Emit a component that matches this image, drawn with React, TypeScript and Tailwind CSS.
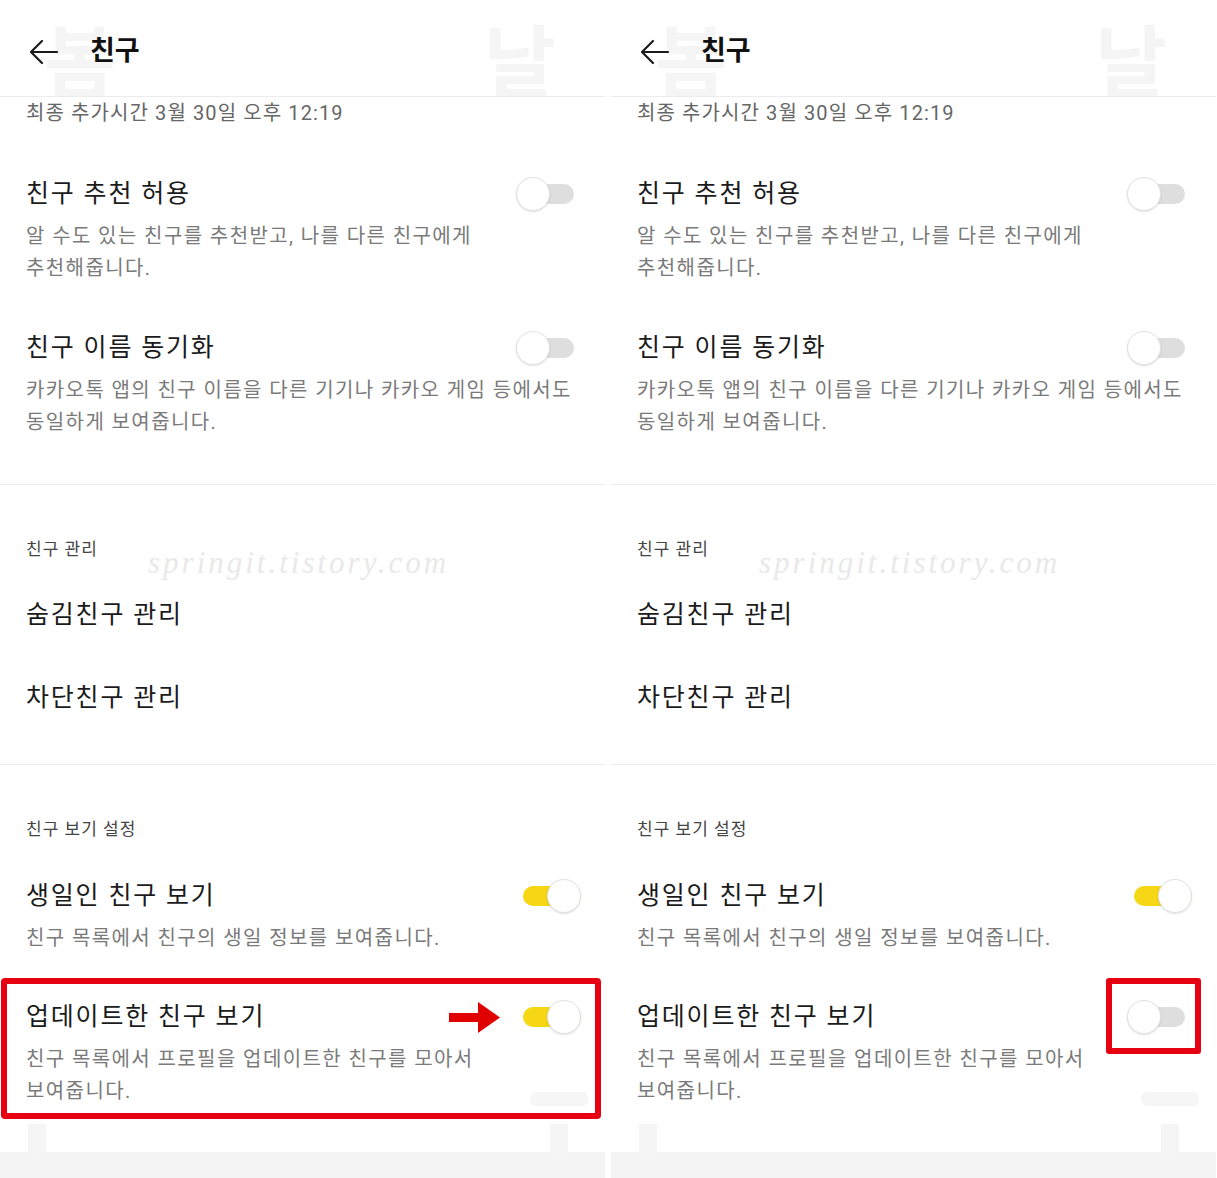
import React from "react";

const FONT = 'Roboto, "Noto Sans CJK KR", sans-serif';

function Toggle({ on }: { on: boolean }) {
  return (
    <div className={`relative h-[34px] w-[58px] shrink-0 ${on ? "mr-[24px]" : "mr-[31px]"}`}>
      <div
        className={`absolute left-0 right-0 top-[7px] h-[20px] rounded-full ${
          on ? "bg-[#f5d716]" : "bg-[#dedede]"
        }`}
      />
      <div
        className={`absolute top-0 h-[34px] w-[34px] rounded-full border border-[#e2e2e2] bg-white shadow-[0_1px_2px_rgba(0,0,0,0.12)] ${
          on ? "right-0" : "left-0"
        }`}
      />
    </div>
  );
}

function Setting({
  title,
  desc,
  on,
  extra,
}: {
  title: string;
  desc: string[];
  on: boolean;
  extra?: React.ReactNode;
}) {
  return (
    <div>
      <div className="flex h-[36px] items-center justify-between pl-[26px]">
        <span className="text-[25px] leading-[36px] tracking-[1.8px] text-[#1b1b1b]">{title}</span>
        <div className="flex items-center">
          {extra}
          <Toggle on={on} />
        </div>
      </div>
      <div className="mt-[8px] pl-[26px] text-[20px] leading-[32px] tracking-[1.4px] text-[#7a7a7a]">
        {desc.map((d) => (
          <div key={d}>{d}</div>
        ))}
      </div>
    </div>
  );
}

function Arrow() {
  return (
    <svg width="52" height="32" viewBox="0 0 52 32" className="mr-[22px]">
      <rect x="0" y="12" width="32" height="9" fill="#e00000" />
      <polygon points="29,1 51,16.5 29,32" fill="#e00000" />
    </svg>
  );
}

function Panel({ right }: { right?: boolean }) {
  return (
    <div className="relative flex w-[605px] shrink-0 flex-col overflow-hidden bg-white" style={{ fontFamily: FONT }}>
      {/* faint watermarks */}
      <div
        className="pointer-events-none absolute left-[148px] top-[540px] text-[31px] italic tracking-[3px] text-[#e9e9e9]"
        style={{ fontFamily: '"Liberation Serif", serif' }}
      >
        springit.tistory.com
      </div>
      <div className="pointer-events-none absolute left-[28px] top-[1124px] h-[30px] w-[18px] bg-[#f5f5f5]" />
      <div className="pointer-events-none absolute left-[550px] top-[1124px] h-[30px] w-[18px] bg-[#f5f5f5]" />
      <div className="pointer-events-none absolute left-[530px] top-[1092px] h-[14px] w-[58px] rounded-md bg-[#f6f6f6]" />

      {/* header */}
      <div className="relative flex h-[97px] items-center overflow-hidden border-b border-[#ececec] pt-[7px]">
        <div className="pointer-events-none absolute left-[44px] top-[26px] text-[78px] font-bold leading-none text-[#f5f5f5]">봄</div>
        <div className="pointer-events-none absolute left-[484px] top-[26px] text-[78px] font-bold leading-none text-[#f5f5f5]">날</div>
        <svg width="30" height="26" viewBox="0 0 30 26" className="relative ml-[29px]" fill="none" stroke="#1b1b1b" strokeWidth="2.2" strokeLinecap="round" strokeLinejoin="round">
          <path d="M28 13H3" />
          <path d="M13 2L2 13l11 11" />
        </svg>
        <span className="relative ml-[31px] text-[27px] font-bold text-[#111]">친구</span>
      </div>

      <div className="relative flex flex-col">
        <div className="pl-[26px] pt-[1px] text-[20px] leading-[31px] tracking-[1.1px] text-[#666]">최종 추가시간 3월 30일 오후 12:19</div>

        <div className="mt-[47px]">
          <Setting
            title="친구 추천 허용"
            desc={["알 수도 있는 친구를 추천받고, 나를 다른 친구에게", "추천해줍니다."]}
            on={false}
          />
        </div>
        <div className="mt-[46px]">
          <Setting
            title="친구 이름 동기화"
            desc={["카카오톡 앱의 친구 이름을 다른 기기나 카카오 게임 등에서도", "동일하게 보여줍니다."]}
            on={false}
          />
        </div>

        <div className="mt-[46px] h-px bg-[#ececec]" />

        <div className="mt-[52px] pl-[26px] text-[17px] leading-[24px] tracking-[1px] text-[#444]">친구 관리</div>
        <div className="mt-[36px] pl-[26px] text-[25px] leading-[36px] tracking-[1.8px] text-[#1b1b1b]">숨김친구 관리</div>
        <div className="mt-[47px] pl-[26px] text-[25px] leading-[36px] tracking-[1.8px] text-[#1b1b1b]">차단친구 관리</div>

        <div className="mt-[48px] h-px bg-[#ececec]" />

        <div className="mt-[52px] pl-[26px] text-[17px] leading-[24px] tracking-[1px] text-[#444]">친구 보기 설정</div>
        <div className="mt-[37px]">
          <Setting title="생일인 친구 보기" desc={["친구 목록에서 친구의 생일 정보를 보여줍니다."]} on={true} />
        </div>

        <div className="relative mt-[45px]">
          <Setting
            title="업데이트한 친구 보기"
            desc={["친구 목록에서 프로필을 업데이트한 친구를 모아서", "보여줍니다."]}
            on={!right}
            extra={right ? undefined : <Arrow />}
          />
          {right ? (
            <div className="absolute left-[495px] top-[-21px] h-[76px] w-[95px] rounded-[3px] border-[6px] border-[#e60012]" />
          ) : (
            <div className="absolute left-[1px] top-[-21px] h-[141px] w-[600px] rounded-[4px] border-[6px] border-[#e60012]" />
          )}
        </div>
      </div>

      <div className="mt-auto h-[26px] bg-[#f4f4f4]" />
    </div>
  );
}

export default function App() {
  return (
    <div className="flex h-[1178px] w-[1217px] gap-[6px] bg-white">
      <Panel />
      <div className="w-[606px] shrink-0 flex">
        <Panel right />
      </div>
    </div>
  );
}
